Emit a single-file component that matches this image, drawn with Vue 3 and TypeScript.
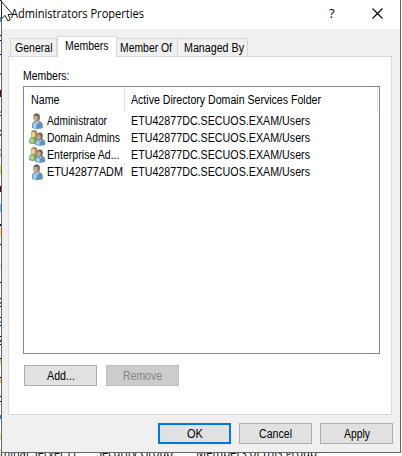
<script setup lang="ts">
import { h } from 'vue'

interface Member { name: string; kind: 'user' | 'group'; width: number }

// Condensed interface label: one line of text set to an exact advance width
const Fit = (p: { text: string; w: number }) =>
  h('svg', { width: p.w, height: 17, overflow: 'visible', style: 'display:block;flex:none' }, [
    h('text', { x: 0, y: 13, textLength: p.w, lengthAdjust: 'spacingAndGlyphs', fill: 'currentColor' }, p.text),
  ])
Fit.props = ['text', 'w']

const folder = 'ETU42877DC.SECUOS.EXAM/Users'
const members: Member[] = [
  { name: 'Administrator', kind: 'user', width: 60 },
  { name: 'Domain Admins', kind: 'group', width: 73 },
  { name: 'Enterprise Ad...', kind: 'group', width: 72.5 },
  { name: 'ETU42877ADM', kind: 'user', width: 76 },
]

// Edges of the list text that shows beside the dialog: [top, height, colour]
const edges: [number, number, string][] = [
  [0, 1, '#222'], [17, 5, '#3a9be0'], [35, 1, '#000'], [40, 1, '#000'], [54, 1, '#000'], [73, 2, '#2b8fe0'],
  [90, 7, '#5c0038'], [111, 2, '#58b4ea'], [115, 1, '#246'], [130, 1, '#000'], [134, 2, '#36648c'],
  [149, 2, '#58b4ea'], [153, 4, '#8cc8ec'], [165, 9, '#e8d860'], [186, 6, '#5c0038'], [204, 8, '#6cc0f0'],
  [224, 2, '#000'], [228, 9, '#f0e080'], [244, 1, '#000'], [265, 1, '#c9a860'], [282, 1, '#000'],
  [298, 1, '#000'], [302, 2, '#a04a20'], [306, 1, '#000'], [317, 1, '#000'], [321, 2, '#3a9be0'],
  [325, 1, '#000'], [336, 1, '#000'], [340, 2, '#702010'], [344, 1, '#000'], [358, 6, '#e8d080'], [358, 1, '#000'],
  [377, 6, '#e8c860'], [377, 1, '#000'], [396, 1, '#000'], [401, 1, '#000'], [415, 4, '#1684e0'], [434, 6, '#f0e090'],
]
</script>

<template>
  <div class="screen">
    <i v-for="(e, i) in edges" :key="i" class="edge" :style="{ top: e[0] + 'px', height: e[1] + 'px', background: e[2] }" />
    <div class="behind">
      <Fit class="b1" text="minal Server Li" :w="76" /><Fit class="b2" text="Security Group" :w="77" /><Fit text="Members of this group" :w="121" />
    </div>
    <section class="dialog">
      <header class="titlebar">
        <h1><Fit text="Administrators Properties" :w="133" /></h1>
        <span class="help">?</span>
        <svg class="close" width="11" height="11" viewBox="0 0 11 11"><path d="M.5.5l10 10M10.5.5l-10 10" stroke="#000" stroke-width="1.15" fill="none" /></svg>
      </header>
      <nav class="tabs">
        <span class="tab t1"><Fit text="General" :w="37.5" /></span>
        <span class="tab active"><Fit text="Members" :w="43.5" /></span>
        <span class="tab t3"><Fit text="Member Of" :w="52" /></span>
        <span class="tab t4"><Fit text="Managed By" :w="60" /></span>
      </nav>
      <main class="panel">
        <div class="label"><Fit text="Members:" :w="46.5" /></div>
        <div class="list">
          <div class="head">
            <span class="hname"><Fit text="Name" :w="28.5" /></span>
            <span class="hfolder"><Fit text="Active Directory Domain Services Folder" :w="190" /></span>
          </div>
          <div v-for="m in members" :key="m.name" class="row">
            <svg v-if="m.kind === 'user'" class="icon" width="16" height="16" viewBox="0 0 16 16">
              <path d="M3 15V11Q3.2 8.8 5.5 8.2L9 7.5Q13.6 8.5 13.8 12V15Q8.4 16.8 3 15Z" fill="#5c92c4" />
              <path d="M3.8 13V11Q4.2 9.4 6 9L8 11.5 7 15.5 4 14.8Z" fill="#a3cae8" />
              <path d="M6 8.3L10 7.5 9.6 9.8 8.5 11Z" fill="#e4d9c8" />
              <ellipse cx="7.7" cy="4.6" rx="3.3" ry="4.2" fill="#857766" />
              <ellipse cx="6.7" cy="5.4" rx="2" ry="2.9" fill="#caa98a" />
              <path d="M4.5 3.6Q5 .4 8 .5 9.8.8 10.7 3 7.5 2 4.5 3.6Z" fill="#62605c" />
            </svg>
            <svg v-else class="icon" width="16" height="16" viewBox="0 0 16 16">
              <path d="M.3 13V9.5Q.5 7.2 3.3 6.8L7 6.8Q9.3 7.5 9 10V13Q4 15 .3 13Z" fill="#72a052" />
              <path d="M1 12V9.7Q1.4 8 3.5 7.7L5.2 10 4.5 13.3Z" fill="#b0d191" />
              <ellipse cx="5.3" cy="4" rx="3.3" ry="3.9" fill="#a18a51" />
              <ellipse cx="4.3" cy="4.5" rx="2" ry="2.7" fill="#ead0a5" />
              <path d="M6.3 15V11.8Q6.5 9.6 9 9.2L12.5 8.8Q15.8 9.4 16 12V15Q11 16.6 6.3 15Z" fill="#5c92c4" />
              <path d="M7 14V11.9Q7.4 10.4 9 10L11 12.3 10.3 15.4Z" fill="#a3cae8" />
              <path d="M9.5 9.3L12.7 8.8 11.6 11.4Z" fill="#eee2d0" />
              <ellipse cx="11" cy="6.1" rx="2.8" ry="3.7" fill="#6c5e51" />
              <ellipse cx="10.1" cy="6.7" rx="1.8" ry="2.5" fill="#cba58a" />
            </svg>
            <span class="name"><Fit :text="m.name" :w="m.width" /></span>
            <Fit :text="folder" :w="179" />
          </div>
        </div>
        <div class="actions">
          <button><Fit text="Add..." :w="28" /></button>
          <button class="remove" disabled><Fit text="Remove" :w="39" /></button>
        </div>
      </main>
      <footer class="footer">
        <button class="ok"><Fit text="OK" :w="16" /></button>
        <button><Fit text="Cancel" :w="33" /></button>
        <button><Fit text="Apply" :w="26" /></button>
      </footer>
    </section>
    <svg class="cursor" width="14" height="23" viewBox="0 0 14 23"><path d="M1.5 1.5V18.8L5.2 15.4 7.7 20.8 10.4 19.8 8 14.4H12.6Z" fill="#fff" stroke="#222" stroke-width="1" /></svg>
  </div>
</template>

<style>
body { background: #fff; overflow: hidden; }
</style>

<style scoped>
* { box-sizing: border-box; }
.screen { position: relative; width: 402px; height: 456px; overflow: hidden; background: #fff; padding-left: 1px; font: 12px/17px "Liberation Sans", Arial, sans-serif; color: #000; white-space: nowrap; }
.edge { position: absolute; left: 0; width: 1px; }
.behind { position: absolute; left: 0; top: 444px; width: 402px; height: 17px; display: flex; font: 12px/16px "Open Sans", "Noto Sans", sans-serif; }
.b1 { margin-right: 20px; }
.b2 { margin-right: 23px; }
.dialog { position: relative; display: flex; flex-direction: column; width: 400px; height: 453px; background: #f0f0f0; border: 1px solid #666; border-top: 0; }
.titlebar { display: flex; height: 29px; background: #fff; padding-left: 9px; }
h1 { margin: 0; padding-top: 5px; width: 318px; font: 12px/17px "Open Sans", "Noto Sans", sans-serif; }
.help { width: 43px; font: 500 13px/26px "Open Sans", sans-serif; }
.close { margin-top: 8px; }
.tabs { display: flex; align-items: flex-end; height: 28px; margin: 0 0 -1px 8px; position: relative; }
.tab { display: flex; height: 19px; border: 1px solid #d9d9d9; border-left: 0; padding-left: 3px; }
.t1 { width: 47px; border-left: 1px solid #d9d9d9; padding-left: 4px; }
.active { width: 60px; height: 21px; background: #fff; border: 1px solid #d9d9d9; border-bottom: 0; padding-left: 7px; }
.t3 { width: 61px; }
.t4 { width: 70px; padding-left: 6px; }
.panel { margin-left: 6px; width: 384px; height: 359px; background: #fff; border: 1px solid #d9d9d9; padding: 10px 0 0 14px; display: flex; flex-direction: column; }
.label { height: 19px; }
.list { width: 357px; height: 268px; border: 1px solid #828790; }
.head { display: flex; height: 25px; }
.head span { padding-top: 4px; border-right: 1px solid #e2e2e2; }
.hname { width: 101px; padding-left: 7px; }
.hfolder { width: 253px; padding-left: 6px; }
.row { display: flex; height: 17px; padding-left: 5px; }
.icon { flex: none; margin-top: 1px; }
.name { width: 86px; padding-left: 2px; }
.actions { display: flex; gap: 9px; margin: 11px 0 0 1px; }
button { display: flex; align-items: center; justify-content: center; width: 73px; height: 21px; padding: 0; border: 1px solid #adadad; background: #e1e1e1; color: #000; font: inherit; }
.remove { background: #ccc; border-color: #bfbfbf; color: #838383; }
.footer { display: flex; gap: 8px; padding: 8px 0 0 156px; }
.ok { border: 2px solid #0078d7; }
.cursor { position: absolute; left: 0; top: 0; }
</style>
